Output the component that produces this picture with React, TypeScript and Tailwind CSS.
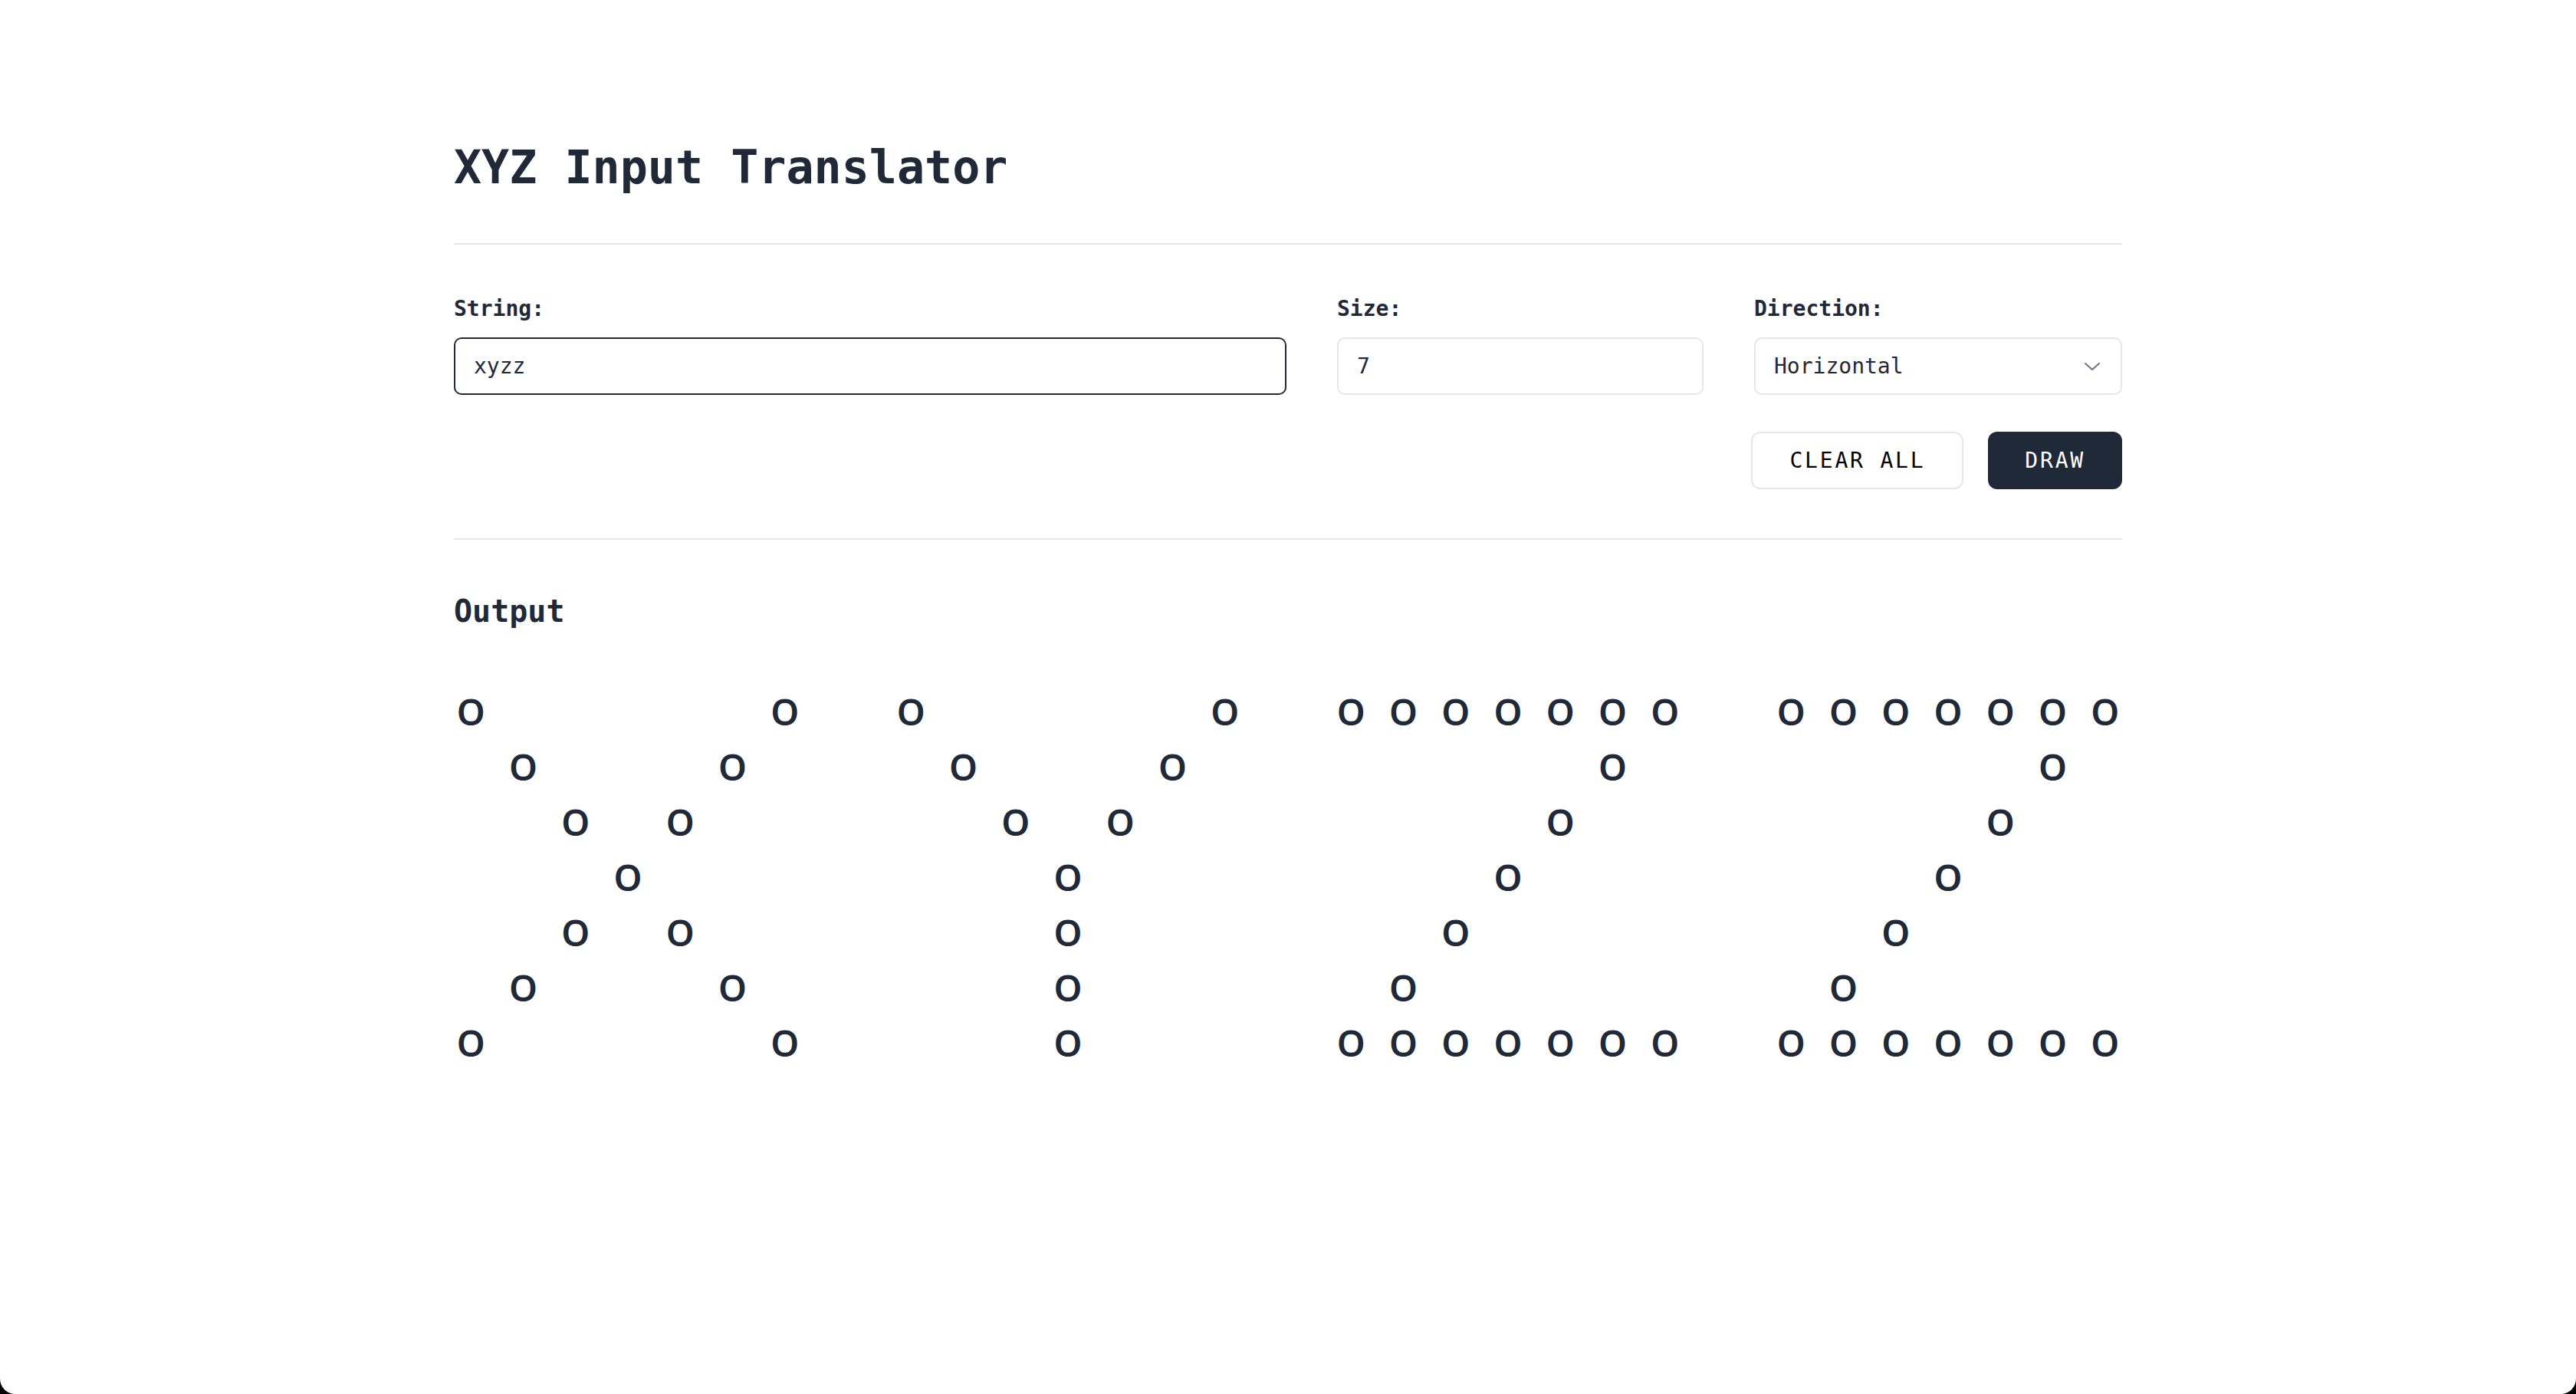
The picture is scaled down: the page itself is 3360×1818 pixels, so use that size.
import { useState } from 'react';

type Direction = 'Horizontal' | 'Vertical';

// builds the on/off cells for one letter of the given size
function letterGrid(ch: string, n: number): boolean[][] {
  const mid = Math.floor(n / 2);
  const rows: boolean[][] = [];
  for (let r = 0; r < n; r++) {
    const row: boolean[] = [];
    for (let c = 0; c < n; c++) {
      let on = false;
      if (ch === 'x') on = c === r || c === n - 1 - r;
      else if (ch === 'y') on = r <= mid ? c === r || c === n - 1 - r : c === mid;
      else if (ch === 'z') on = r === 0 || r === n - 1 || c === n - 1 - r;
      row.push(on);
    }
    rows.push(row);
  }
  return rows;
}

function Letter({ ch, size }: { ch: string; size: number }) {
  const grid = letterGrid(ch, size);
  return (
    <div className="flex-1 grid gap-x-6" style={{ gridTemplateColumns: `repeat(${size}, minmax(0, 1fr))` }}>
      {grid.flatMap((row, r) =>
        row.map((on, c) => (
          <span
            key={`${r}-${c}`}
            className="h-[72px] text-center text-[47px] leading-[72px] font-semibold font-['Noto_Sans',sans-serif] text-[#1f2937]"
          >
            {on ? 'O' : ''}
          </span>
        ))
      )}
    </div>
  );
}

export default function App() {
  const [text, setText] = useState('xyzz');
  const [size, setSize] = useState('7');
  const [direction, setDirection] = useState<Direction>('Horizontal');
  const [drawn, setDrawn] = useState({ text: 'xyzz', size: 7 });

  const clearAll = () => {
    setText('');
    setSize('');
    setDrawn({ text: '', size: 0 });
  };

  const draw = () => {
    const n = parseInt(size, 10);
    setDrawn({ text: text.toLowerCase(), size: Number.isFinite(n) ? n : 0 });
  };

  const letters = drawn.text.split('').filter((ch) => 'xyz'.includes(ch));

  return (
    <div className="h-[1818px] overflow-hidden bg-black">
      <div className="h-full rounded-b-[20px] bg-white font-['DejaVu_Sans_Mono',monospace] text-[#1f2937]">
        <div className="mx-auto w-[2176px] pt-[188px]">
          <h1 className="text-[60px] leading-[60px] font-bold">XYZ Input Translator</h1>

          <div className="mt-[69px] h-[2px] bg-[#e5e7eb]" />

          <div className="mt-[63px] grid grid-cols-[1fr_478px_480px] gap-x-[66px]">
            <label className="flex flex-col">
              <span className="text-[28px] leading-[42px] font-bold">String:</span>
              <input
                value={text}
                onChange={(e) => setText(e.target.value)}
                className="mt-[16px] h-[75px] rounded-[10px] border-2 border-[#1f2937] bg-white px-6 text-[28px] text-[#1f2937] outline-none"
              />
            </label>
            <label className="flex flex-col">
              <span className="text-[28px] leading-[42px] font-bold">Size:</span>
              <input
                value={size}
                onChange={(e) => setSize(e.target.value)}
                className="mt-[16px] h-[75px] rounded-[10px] border-2 border-[#e5e7eb] bg-white px-6 text-[28px] text-[#1f2937] outline-none focus:border-[#1f2937]"
              />
            </label>
            <label className="flex flex-col">
              <span className="text-[28px] leading-[42px] font-bold">Direction:</span>
              <div className="relative mt-[16px]">
                <select
                  value={direction}
                  onChange={(e) => setDirection(e.target.value as Direction)}
                  className="h-[75px] w-full appearance-none rounded-[10px] border-2 border-[#e5e7eb] bg-white px-6 text-[28px] text-[#1f2937] outline-none"
                >
                  <option>Horizontal</option>
                  <option>Vertical</option>
                </select>
                <svg
                  viewBox="0 0 22 12"
                  fill="none"
                  stroke="#6b7280"
                  strokeWidth="2"
                  strokeLinecap="round"
                  strokeLinejoin="round"
                  className="pointer-events-none absolute right-[28px] top-[32px] h-[12px] w-[22px]"
                >
                  <path d="M2 2l9 8 9-8" />
                </svg>
              </div>
            </label>
          </div>

          <div className="mt-[48px] flex justify-end gap-8">
            <button
              type="button"
              onClick={clearAll}
              className="h-[75px] rounded-[12px] border-2 border-[#e5e7eb] bg-white px-12 text-[28px] tracking-[0.1em] text-black"
            >
              CLEAR ALL
            </button>
            <button
              type="button"
              onClick={draw}
              className="h-[75px] rounded-[12px] bg-[#1f2937] px-12 text-[28px] tracking-[0.1em] text-white"
            >
              DRAW
            </button>
          </div>

          <div className="mt-[64px] h-[2px] bg-[#e5e7eb]" />

          <h2 className="mt-[63px] text-[40px] leading-[60px] font-bold">Output</h2>

          <div className="mt-[65px] flex gap-x-[120px]">
            {drawn.size > 0 && letters.map((ch, i) => <Letter key={i} ch={ch} size={drawn.size} />)}
          </div>
        </div>
      </div>
    </div>
  );
}
